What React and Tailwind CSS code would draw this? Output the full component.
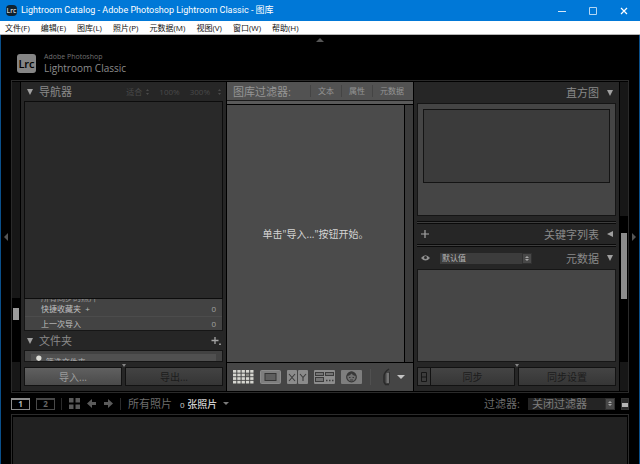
import { useState } from "react";

const MENUS = ["文件(F)", "编辑(E)", "图库(L)", "照片(P)", "元数据(M)", "视图(V)", "窗口(W)", "帮助(H)"];
const FILTERS = ["文本", "属性", "元数据"];

const VIEWS = [
  { id: "grid", label: "网格视图", Icon: GridIcon },
  { id: "loupe", label: "放大视图", Icon: LoupeIcon },
  { id: "compare", label: "比较视图", Icon: CompareIcon },
  { id: "survey", label: "筛选视图", Icon: SurveyIcon },
  { id: "people", label: "人物", Icon: PeopleIcon },
];

function Triangle({ dir = "down", className = "" }) {
  const points = {
    down: "0,0 8,0 4,8",
    up: "0,8 8,8 4,0",
    left: "8,0 8,8 0,4",
    right: "0,0 0,8 8,4",
  };
  return (
    <svg viewBox="0 0 8 8" preserveAspectRatio="none" className={`shrink-0 ${className}`} aria-hidden="true">
      <polygon points={points[dir]} fill="currentColor" />
    </svg>
  );
}

function GridIcon() {
  const cells = [];
  for (let r = 0; r < 4; r++) {
    for (let c = 0; c < 5; c++) {
      cells.push(
        <rect key={`${r}-${c}`} x={c * 4.3} y={r * 3.6} width="3.3" height="2.7" fill={r === 1 && c === 3 ? "#8a8a84" : "#d6d6d0"} />
      );
    }
  }
  return <svg viewBox="0 0 21 14" className="w-[21px] h-3.5">{cells}</svg>;
}

function LoupeIcon() {
  return (
    <svg viewBox="0 0 21 14" className="w-[21px] h-3.5">
      <rect x="0.5" y="0.5" width="20" height="13" rx="1" fill="#7e7e7e" stroke="#8c8c8c" />
      <rect x="5" y="3.5" width="11" height="7" fill="#5e5e5e" stroke="#353535" />
    </svg>
  );
}

function CompareIcon() {
  return (
    <svg viewBox="0 0 21 14" className="w-[21px] h-3.5">
      <rect width="10" height="14" rx="1" fill="#8b8b8b" />
      <rect x="11" width="10" height="14" rx="1" fill="#8b8b8b" />
      <path d="M2 4l6 7M8 4l-6 7M13 4l3 3.5L19 4M16 7.5V11" fill="none" stroke="#3c3c3c" strokeWidth="1.1" />
    </svg>
  );
}

function SurveyIcon() {
  return (
    <svg viewBox="0 0 21 14" className="w-[21px] h-3.5">
      <rect width="21" height="14" rx="1" fill="#8d8d8d" />
      <rect x="1.5" y="2.5" width="8" height="3" fill="#747474" stroke="#3c3c3c" />
      <rect x="11.5" y="2.5" width="8" height="3" fill="#747474" stroke="#3c3c3c" />
      <rect x="1.5" y="7.5" width="8" height="4" fill="#747474" stroke="#3c3c3c" />
      <path d="M12 10.5h1.5M15 10.5h1.5M18 10.5h1.5" stroke="#3c3c3c" strokeWidth="1.5" />
    </svg>
  );
}

function PeopleIcon() {
  return (
    <svg viewBox="0 0 21 14" className="w-[21px] h-3.5">
      <rect width="21" height="14" rx="1" fill="#7e7e7e" />
      <circle cx="10.5" cy="7" r="4.8" fill="#707070" stroke="#383838" strokeWidth="1.2" />
      <path d="M6 6c2-.2 3.500-1 4.500-2.500C11.500 5 13 5.800 15 6c0-3-2-4.500-4.500-4.500S6 3 6 6z" fill="#383838" />
      <path d="M8 7.500h1.500M11.500 7.500H13M9 10h3" stroke="#383838" strokeWidth="1" />
    </svg>
  );
}

function SprayIcon() {
  return (
    <svg viewBox="0 0 8 18" className="w-2 h-[18px]" aria-hidden="true">
      <path d="M6 1C3 3 1 5.500 1 8v6l1.500 2.500H6" fill="none" stroke="#2a2a2a" strokeWidth="1.500" />
      <path d="M3.500 5H6.500v10h-3z" fill="#757575" />
      <path d="M6.500 4v11.500" stroke="#333" />
    </svg>
  );
}

function StepperIcon() {
  return (
    <span className="pointer-events-none absolute inset-y-0 right-0 flex w-2.5 flex-col items-center justify-center gap-px border border-[#303030] bg-[#484848] text-[#a5a5a5]">
      <Triangle dir="up" className="w-1 h-0.5" />
      <Triangle className="w-1 h-0.5" />
    </span>
  );
}

function ZoomArrows() {
  return (
    <span className="flex flex-col gap-0.5">
      <Triangle dir="up" className="h-0.5 w-[3px]" />
      <Triangle className="h-0.5 w-[3px]" />
    </span>
  );
}

function TitleBar() {
  return (
    <header className="flex h-[21px] items-center bg-[#0078d7] pr-px text-white">
      <span className="ml-1.5 flex h-[11px] w-[11px] items-center justify-center rounded-sm bg-[#10222f] text-[7px] leading-none">Lrc</span>
      <h1 className="ml-1 flex-1 whitespace-nowrap font-['Roboto','Noto_Sans_CJK_SC',sans-serif] text-[9px] leading-none">
        Lightroom Catalog - Adobe Photoshop Lightroom Classic - 图库
      </h1>
      <div className="flex">
        <button type="button" aria-label="最小化" className="flex h-[21px] w-[31px] items-center justify-center">
          <svg viewBox="0 0 8 8" className="h-2 w-2"><path d="M0 4.500h8" stroke="#d5e8f8" /></svg>
        </button>
        <button type="button" aria-label="最大化" className="flex h-[21px] w-[31px] items-center justify-center">
          <svg viewBox="0 0 8 8" className="h-2 w-2"><path d="M.5.5h7v7h-7z" fill="none" stroke="#b5d7f3" /></svg>
        </button>
        <button type="button" aria-label="关闭" className="flex h-[21px] w-[31px] items-center justify-center">
          <svg viewBox="0 0 8 8" className="h-2 w-2"><path d="M1 1l6 6M7 1L1 7" stroke="#fff" strokeWidth="1.200" /></svg>
        </button>
      </div>
    </header>
  );
}

function MenuBar() {
  return (
    <nav className="flex h-3.5 items-center gap-[11px] border-b border-[#b5b5b5] bg-white pl-[5px] text-[#111]">
      {MENUS.map((m) => (
        <button key={m} type="button" className="whitespace-nowrap text-[8px] leading-none">{m}</button>
      ))}
    </nav>
  );
}

function Brand() {
  return (
    <div className="grid h-[45px] grid-cols-[1fr_auto_1fr] items-start">
      <div className="flex items-center gap-2 pl-4 pt-[17px]">
        <span className="flex h-[19px] w-[19px] items-center justify-center rounded-[3px] bg-[#858585] text-[11px] font-semibold leading-none text-black">Lrc</span>
        <div className="whitespace-nowrap">
          <p className="text-[7px] leading-[10px] text-[#707070]">Adobe Photoshop</p>
          <p className="text-[10px] leading-3 text-[#8c8c8c]">Lightroom Classic</p>
        </div>
      </div>
      <Triangle dir="up" className="mt-[3px] h-1 w-2 text-[#555]" />
    </div>
  );
}

function ScrollTrack({ children }) {
  return <div className="flex flex-col bg-[#171717]">{children}</div>;
}

function LeftPanel() {
  return (
    <aside className="flex flex-col bg-[#262626] px-[3px]">
      <div className="flex h-[19px] items-center pl-[3px] text-[#4a4a4a]">
        <Triangle className="h-1.5 w-1.5 text-[#a0a0a0]" />
        <h2 className="ml-1.5 flex-1 text-[11px] leading-none text-[#8a8a8a]">导航器</h2>
        <div className="flex items-center gap-2.5 pr-0.5 text-[8px] leading-none">
          <button type="button" className="flex items-center gap-1">适合<ZoomArrows /></button>
          <button type="button">100%</button>
          <button type="button" className="flex items-center gap-2">300%<ZoomArrows /></button>
        </div>
      </div>
      <div className="min-h-[198px] flex-1 border border-[#0c0c0c] bg-[#292929]" />
      <ul className="flex h-8 flex-col justify-end overflow-hidden border-x border-b border-[#161616] bg-[#434343] text-[8px] leading-none text-[#c0c0c0]">
        <li className="flex h-3.5 shrink-0 items-end pl-4 text-[#9a9a9a]">所有同步的照片</li>
        <li className="flex h-3.5 shrink-0 items-center justify-between pl-4 pr-1.5">
          <span>快捷收藏夹 &nbsp;+</span>
          <span className="text-[#a0a0a0]">0</span>
        </li>
        <li className="flex h-3.5 shrink-0 items-center justify-between border-t border-[#4c4c4c] pl-4 pr-1.5">
          <span>上一次导入</span>
          <span className="text-[#a0a0a0]">0</span>
        </li>
      </ul>
      <div className="flex h-[19px] items-center pl-[3px] pr-0.5">
        <Triangle className="h-1.5 w-1.5 text-[#a0a0a0]" />
        <h2 className="ml-1.5 flex-1 text-[11px] leading-none text-[#8a8a8a]">文件夹</h2>
        <button type="button" aria-label="添加文件夹">
          <svg viewBox="0 0 10 10" className="h-2.5 w-2.5">
            <path d="M4 1v7M.5 4.500h7" stroke="#a5a5a5" strokeWidth="1.300" />
            <path d="M8 7.500h2v1.500H8z" fill="#909090" />
          </svg>
        </button>
      </div>
      <div className="h-3 overflow-hidden border border-[#161616] bg-[#424242] px-1.5 pt-[3px]">
        <label className="flex h-3.5 items-center gap-1 bg-[#505050] pl-[5px]">
          <svg viewBox="0 0 6 8" className="h-2 w-1.5 -mt-1"><circle cx="3" cy="3" r="2.800" fill="#deded8" /><path d="M3 5v3" stroke="#deded8" /></svg>
          <input type="text" placeholder="筛选文件夹" aria-label="筛选文件夹" className="h-3.5 w-full min-w-0 bg-transparent text-[8px] leading-none outline-none placeholder:text-[#b0b0b0]" />
        </label>
      </div>
      <div className="flex h-[29px] flex-col items-center">
        <Triangle className="mt-0.5 h-[3px] w-1 text-[#858585]" />
        <div className="grid w-full grid-cols-2 gap-[3px]">
          <button type="button" className="h-[19px] border border-[#121212] bg-linear-to-b from-[#606060] to-[#4a4a4a] text-[10px] leading-none text-[#9c9c9c]">导入...</button>
          <button type="button" disabled className="h-[19px] border border-[#121212] bg-linear-to-b from-[#434343] to-[#353535] text-[10px] leading-none text-[#1c1c1c]">导出...</button>
        </div>
      </div>
    </aside>
  );
}

function CenterPanel() {
  const [view, setView] = useState("grid");

  return (
    <main className="flex min-w-0 flex-col bg-[#464646]">
      <div className="flex h-[19px] items-center border-b border-[#1c1c1c] bg-[#525252] pl-1.5 pr-0.5 text-[#959595]">
        <h2 className="flex-1 whitespace-nowrap text-[11px] leading-none">图库过滤器:</h2>
        {FILTERS.map((f) => (
          <button key={f} type="button" className="flex h-3 items-center whitespace-nowrap border-l border-[#444] px-[7px] text-[8px] leading-none">
            {f}
          </button>
        ))}
      </div>
      <div className="h-[3px] bg-[#5a5a5a]" />
      <div className="flex flex-1 border-y border-black">
        <p className="flex flex-1 items-center justify-center bg-[#4b4b4b] text-[10px] leading-none text-[#d5d5d5]">
          单击"导入..."按钮开始。
        </p>
        <div className="w-[9px] border-l border-black bg-[#3b3b3b]" />
      </div>
      <div className="flex h-7 items-center gap-1.5 bg-[#454545] pl-1.5">
        {VIEWS.map(({ id, label, Icon }) => (
          <button key={id} type="button" aria-label={label} aria-pressed={view === id} onClick={() => setView(id)}>
            <Icon />
          </button>
        ))}
        <span className="ml-0.5 h-4 w-px bg-[#505050]" />
        <button type="button" aria-label="喷涂工具" className="ml-1.5">
          <SprayIcon />
        </button>
        <button type="button" aria-label="工具栏选项">
          <Triangle className="h-1 w-2 text-[#c4c4c4]" />
        </button>
      </div>
    </main>
  );
}

function RightPanel() {
  return (
    <aside className="flex flex-col bg-[#262626] px-[3px]">
      <div className="flex h-[21px] items-center justify-end gap-2 pr-[3px]">
        <h2 className="text-[11px] leading-none text-[#8a8a8a]">直方图</h2>
        <Triangle className="h-1.5 w-1.5 text-[#a0a0a0]" />
      </div>
      <div className="h-[113px] border border-[#151515] bg-[#454545] px-[5px] pt-[5px]">
        <div className="h-[74px] border border-[#141414] bg-[#3b3b3b]" />
      </div>
      <div className="mt-[5px] h-[3px] border-y border-[#0a0a0a] bg-[#3d3d3d]" />
      <div className="flex h-5 items-center pl-1 pr-[3px]">
        <button type="button" aria-label="添加关键字">
          <svg viewBox="0 0 8 8" className="h-2 w-2"><path d="M4 0v8M0 4h8" stroke="#a5a5a5" strokeWidth="1.200" /></svg>
        </button>
        <h2 className="flex-1 text-right text-[11px] leading-none text-[#8a8a8a]">关键字列表</h2>
        <Triangle dir="left" className="ml-2 h-1.5 w-1.5 text-[#a0a0a0]" />
      </div>
      <div className="h-[3px] border-y border-[#0a0a0a] bg-[#3d3d3d]" />
      <div className="flex h-[22px] items-center pl-1 pr-[3px]">
        <svg viewBox="0 0 10 8" className="h-2 w-2.5" aria-hidden="true">
          <path d="M0 4Q4.500-1.500 9 4Q4.500 9 0 4z" fill="#909090" />
          <circle cx="4.500" cy="3.500" r="1.500" fill="#2a2a2a" />
        </svg>
        <div className="relative ml-[9px] h-[11px] w-[92px]">
          <select aria-label="元数据预设" className="block h-full w-full appearance-none bg-[#3c3c3c] pl-0.5 text-[8px] leading-none text-[#b5b5b5]">
            <option>默认值</option>
          </select>
          <StepperIcon />
        </div>
        <h2 className="flex-1 text-right text-[11px] leading-none text-[#8a8a8a]">元数据</h2>
        <Triangle className="ml-2 h-1.5 w-1.5 text-[#a0a0a0]" />
      </div>
      <div className="min-h-[93px] flex-1 border border-[#161616] bg-[#464646]" />
      <div className="flex h-[29px] flex-col items-center">
        <Triangle className="mt-0.5 h-[3px] w-1 text-[#858585]" />
        <div className="flex w-full">
          <button type="button" disabled aria-label="自动同步" className="flex h-[19px] w-3.5 items-center justify-center border border-[#121212] bg-[#3c3c3c]">
            <svg viewBox="0 0 6 10" className="h-2.5 w-1.5"><path d="M.5.5h5v9h-5zM.5 5h5" fill="none" stroke="#161616" /></svg>
          </button>
          <button type="button" disabled className="h-[19px] flex-1 border border-l-0 border-[#121212] bg-linear-to-b from-[#444] to-[#363636] text-[10px] leading-none text-[#1c1c1c]">同步</button>
          <button type="button" disabled className="ml-[3px] h-[19px] w-[98px] border border-[#121212] bg-linear-to-b from-[#444] to-[#363636] text-[10px] leading-none text-[#1c1c1c]">同步设置</button>
        </div>
      </div>
    </aside>
  );
}

function FilmstripBar() {
  return (
    <div className="mx-2.5 flex h-[21px] items-center text-[#4e4e4e]">
      <button type="button" className="h-3 w-[19px] border border-t-2 border-[#8c8c8c] text-[8px] font-bold leading-none text-[#b5b5b5]">1</button>
      <button type="button" className="ml-1.5 h-3 w-[19px] border border-t-2 border-[#484848] text-[8px] font-bold leading-none text-[#686868]">2</button>
      <span className="ml-1.5 h-3 w-px bg-[#2a2a2a]" />
      <button type="button" aria-label="网格" className="ml-[7px]">
        <svg viewBox="0 0 11 11" className="h-[11px] w-[11px]"><path d="M0 0h4.500v4.500H0zM6.500 0H11v4.500H6.500zM0 6.500h4.500V11H0zM6.500 6.500H11V11H6.500z" fill="#5a5a5a" /></svg>
      </button>
      <button type="button" aria-label="后退" className="ml-[7px]">
        <svg viewBox="0 0 9 9" className="h-[9px] w-[9px]"><path d="M0 4.500L5 0v3h4v3H5v3z" fill="#5a5a5a" /></svg>
      </button>
      <button type="button" aria-label="前进" className="ml-2">
        <svg viewBox="0 0 9 9" className="h-[9px] w-[9px]"><path d="M9 4.500L4 0v3H0v3h4v3z" fill="#5a5a5a" /></svg>
      </button>
      <span className="ml-[7px] h-3 w-px bg-[#2a2a2a]" />
      <span className="ml-[7px] whitespace-nowrap text-[11px] leading-none text-[#6c6c6c]">所有照片</span>
      <button type="button" className="ml-2 flex items-center gap-1.5 whitespace-nowrap text-[10px] font-medium leading-none text-[#cfcfcf]">
        <span><span className="text-[8px]">0</span> 张照片</span>
        <Triangle className="h-[3px] w-1.5 text-[#7a7a7a]" />
      </button>
      <label htmlFor="film-filter" className="ml-auto whitespace-nowrap text-[11px] leading-none text-[#6c6c6c]">过滤器:</label>
      <div className="relative ml-2 h-3 w-[87px]">
        <select id="film-filter" className="block h-full w-full appearance-none bg-[#242424] pl-1 text-[11px] leading-none text-[#7c7c7c]">
          <option>关闭过滤器</option>
        </select>
        <StepperIcon />
      </div>
      <button type="button" aria-label="过滤器开关" className="ml-1.5 flex h-3 w-2 flex-col justify-end border border-[#333] bg-[#2a2a2a] pb-0.5">
        <span className="h-1 w-full bg-[#b5b5b5]" />
      </button>
    </div>
  );
}

export default function App() {
  return (
    <div className="flex min-h-screen flex-col overflow-hidden bg-black font-['Open_Sans','Noto_Sans_CJK_SC',sans-serif]">
      <TitleBar />
      <MenuBar />
      <div className="flex flex-1 flex-col border-x border-[#0a4f8a]">
        <Brand />
        <div className="flex flex-1">
          <button type="button" aria-label="隐藏左侧面板" className="flex w-2.5 items-center justify-center">
            <Triangle dir="left" className="h-2 w-1 text-[#555]" />
          </button>
          <div className="grid min-w-0 flex-1 grid-cols-[8px_205px_minmax(0,1fr)_205px_8px] gap-x-px border border-[#2a2a2a] bg-black py-px">
            <ScrollTrack>
              <div className="flex-1" />
              <div className="flex h-16 flex-col justify-start bg-black px-px pt-2.5">
                <div className="h-3 bg-[#9a9a9a]" />
              </div>
              <div className="h-[29px]" />
            </ScrollTrack>
            <LeftPanel />
            <CenterPanel />
            <RightPanel />
            <ScrollTrack>
              <div className="h-[134px]" />
              <div className="flex-1 bg-black px-px pt-[17px]">
                <div className="h-[66px] bg-[#8c8c8c]" />
              </div>
              <div className="h-[29px]" />
            </ScrollTrack>
          </div>
          <button type="button" aria-label="隐藏右侧面板" className="flex w-2.5 items-center justify-center">
            <Triangle dir="right" className="h-2 w-1 text-[#555]" />
          </button>
        </div>
        <FilmstripBar />
        <div className="mx-2.5 h-[50px] border border-b-0 border-[#2c2c2c] bg-black px-px pt-0.5">
          <div className="h-full bg-[#212121]" />
        </div>
      </div>
    </div>
  );
}
